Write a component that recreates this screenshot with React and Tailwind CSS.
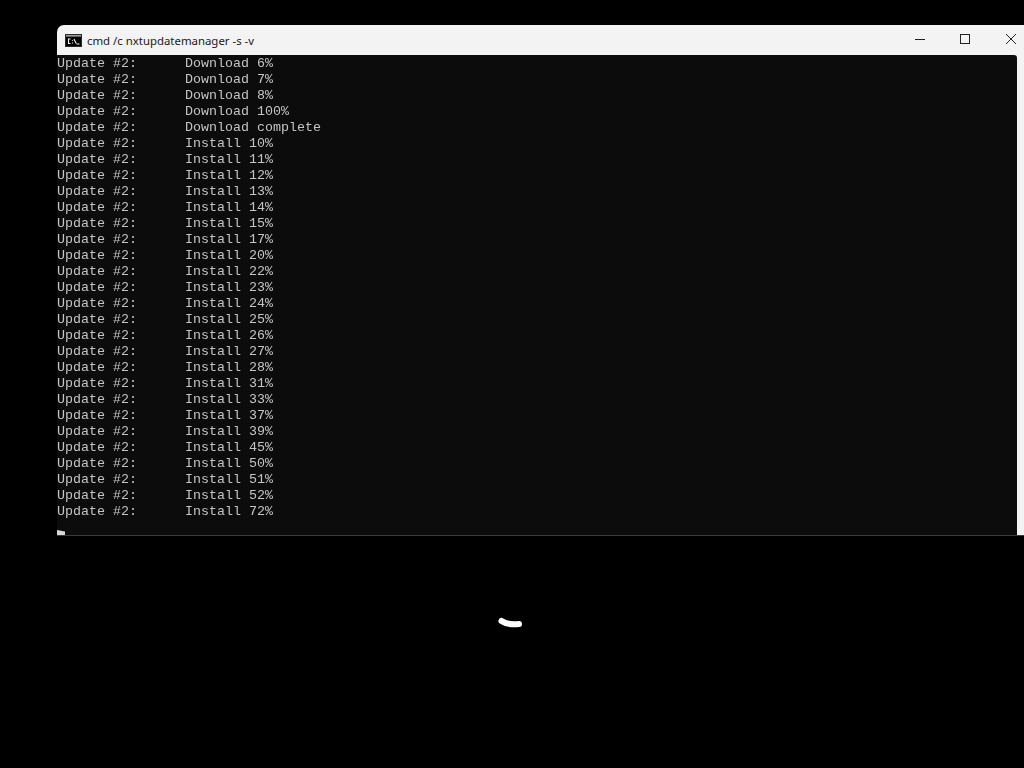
import React from 'react';

const downloads = ['Download 6%', 'Download 7%', 'Download 8%', 'Download 100%', 'Download complete'];
const installs = [10, 11, 12, 13, 14, 15, 17, 20, 22, 23, 24, 25, 26, 27, 28, 31, 33, 37, 39, 45, 50, 51, 52, 72];
const lines = [...downloads, ...installs.map((n) => `Install ${n}%`)];

const CmdIcon = () => (
  <svg width="17" height="13" viewBox="0 0 17 13" className="block">
    <rect x="0" y="0" width="17" height="13" fill="#2a2a2a" />
    <rect x="1" y="1" width="15" height="1.5" fill="#9a9a9a" />
    <rect x="1" y="3" width="15" height="9" fill="#000" />
    <path d="M5.5 5H3.5v4.5h2M7.5 6v.8M7.5 8.6v.8M9 5l2.2 4.5M11.5 10h3" stroke="#f0f0f0" strokeWidth="1.1" fill="none" />
  </svg>
);

const App = () => (
  <div className="w-[1024px] h-[768px] bg-black overflow-hidden relative">
    <div className="pt-[25px] pl-[57px]">
      <div className="w-[967px] h-[511px] flex flex-col bg-[#f3f3f3] rounded-tl-[7px] border-b border-[#3a3a3a]">
        {/* Title bar */}
        <div className="h-[30px] flex items-center shrink-0 relative">
          <div className="ml-2 mr-[5px]">
            <CmdIcon />
          </div>
          <span className="pt-px text-[11.4px] text-[#1a1a1a] font-['Noto_Sans','Liberation_Sans',sans-serif]">cmd /c nxtupdatemanager -s -v</span>
          <div className="absolute left-[858px] top-[14px] w-[10px] h-px bg-[#222]" />
          <div className="absolute left-[903px] top-[9px] w-[10px] h-[10px] border border-[#222]" />
          <svg className="absolute left-[948px] top-[8px]" width="12" height="12" viewBox="0 0 12 12">
            <path d="M1 1l10 10M11 1L1 11" stroke="#222" strokeWidth="1" fill="none" />
          </svg>
        </div>
        {/* Console output */}
        <div className="flex-1 pt-px bg-[#0c0c0c] w-[960px] rounded-tr-[3px] relative overflow-hidden will-change-transform font-['Liberation_Mono',monospace] text-[13.33px] leading-[16px] text-[#c4c4c4]">
          {lines.map((line, i) => (
            <div key={i} className="flex h-4">
              <span className="w-[128px] shrink-0">Update #2:</span>
              <span>{line}</span>
            </div>
          ))}
          <div className="absolute left-0 bottom-0 w-2 h-[5px] bg-[#d8d8d8] [clip-path:polygon(0_100%,100%_100%,100%_30%,0_0)]" />
        </div>
      </div>
    </div>
    {/* Spinner */}
    <svg className="absolute left-[497px] top-[616px]" width="27" height="14" viewBox="0 0 27 14">
      <path d="M4.5 5C8 7.5 12 9 22 8" stroke="#fff" strokeWidth="6" strokeLinecap="round" fill="none" />
    </svg>
  </div>
);

export default App;
